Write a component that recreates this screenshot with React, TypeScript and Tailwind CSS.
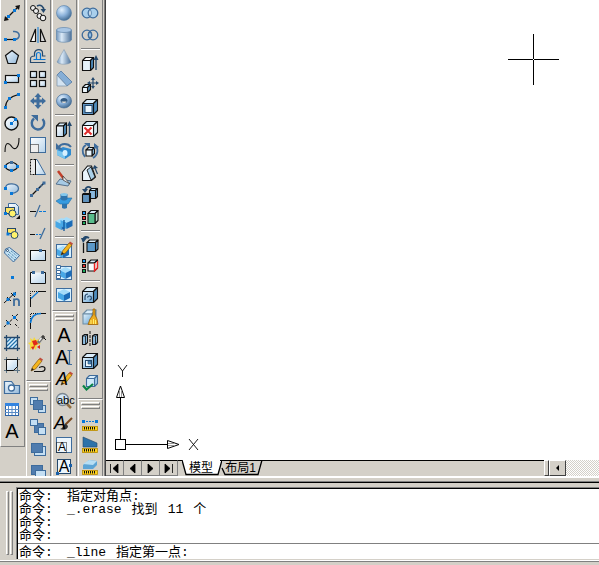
import type { ReactNode } from "react";

const INK = "#111111";
const BLUE = "#0878d8";
const STEEL = "#3e6c9c";
const NAVY = "#24486c";

type Tool = { name: string; art: ReactNode };
type Item = Tool | "sep";

const Dot = ({ x, y, c = BLUE }: { x: number; y: number; c?: string }) => (
  <rect x={x - 1.5} y={y - 1.5} width="3" height="3" fill={c} stroke="none" />
);

// Isometric looking box: front face plus top and right side
const Box = ({ x, y, w, h, d, front = "url(#face)", side = "#4f8dbd", top = "#d9edfa", line = INK }: {
  x: number; y: number; w: number; h: number; d: number;
  front?: string; side?: string; top?: string; line?: string;
}) => (
  <g stroke={line} strokeWidth="1.1" strokeLinejoin="round">
    <path d={`M${x} ${y}l${d} ${-d}h${w}l${-d} ${d}z`} fill={top} />
    <path d={`M${x + w} ${y}l${d} ${-d}v${h}l${-d} ${d}z`} fill={side} />
    <rect x={x} y={y} width={w} height={h} fill={front} />
  </g>
);

const Hex = ({ x, y, s }: { x: number; y: number; s: number }) => (
  <g>
    <path d={`M${x} ${y - s}l${s} ${s / 2}l${-s} ${s / 2}l${-s} ${-s / 2}z`} fill="#a5dcfa" />
    <path d={`M${x - s} ${y - s / 2}l${s} ${s / 2}v${s}l${-s} ${-s / 2}z`} fill="#48a8e6" />
    <path d={`M${x + s} ${y - s / 2}l${-s} ${s / 2}v${s}l${s} ${-s / 2}z`} fill="#1c6cb8" />
  </g>
);

const Letter = ({ size = "text-xl", x = "" }: { size?: string; x?: string }) => (
  <span className={`absolute inset-0 flex items-center justify-center leading-none text-black ${size} ${x}`}>A</span>
);

const Ruler = () => (
  <g>
    <rect x="2.5" y="13.5" width="15" height="4" fill="#ffd21a" stroke="#b88a00" strokeWidth=".8" />
    <path d="M4.5 14v2.5M6.5 14v2.5M8.5 14v2.5M10.5 14v2.5M12.5 14v2.5M14.5 14v2.5" stroke={INK} />
  </g>
);

const Swatch = ({ c, y }: { c: string; y: number }) => (
  <rect x="2.5" y={y + 0.5} width="3" height="3" fill={c} stroke={INK} />
);

const Brush = () => (
  <g>
    <path d="M18 5l-7 7" stroke="#7a4a20" strokeWidth="2" />
    <path d="M12 11c-3 0-2 4-6 5 4 2 8 0 8-3z" fill="#333" stroke="none" />
  </g>
);

const Pencil = ({ x = 0, y = 0 }: { x?: number; y?: number }) => (
  <g transform={`translate(${x} ${y})`} stroke="none">
    <path d="M3 13l1.500-4 6.500-8 3 2-6.500 8z" fill="#f5b51c" stroke="#82550c" strokeWidth=".7" />
    <path d="M11 1l1-1.500 3 2-1 1.500z" fill="#c04a3a" />
    <path d="M3 13l1-3 2 1.500z" fill="#222" />
  </g>
);

const drawTools: Item[] = [
  { name: "直线", art: <g><path d="M4 16L16 4" stroke={INK} strokeWidth="1.3" /><path d="M2 18l1-5 4 4zM18 2l-5 1 4 4z" fill={INK} /><Dot x={6.5} y={13.5} /><Dot x={12.5} y={7.5} /></g> },
  { name: "多段线", art: <g><path d="M3 14.5h9.5" stroke={INK} strokeWidth="1.2" /><path d="M11 6.5c8-1 8 8 1.500 8" stroke={STEEL} strokeWidth="1.5" /><Dot x={3.5} y={14.5} /><Dot x={12.5} y={14.5} /></g> },
  { name: "正多边形", art: <path d="M10 3.500l6.500 5-2.500 8H6l-2.500-8z" fill="url(#soft)" stroke={INK} strokeWidth="1.2" /> },
  { name: "矩形", art: <g><rect x="3.5" y="6.5" width="13" height="7" fill="url(#pale)" stroke={INK} strokeWidth="1.2" /><Dot x={3.5} y={13.5} /><Dot x={16.5} y={6.5} /></g> },
  { name: "圆弧", art: <g><path d="M3.500 16.500c0-7 5-11 13-13" stroke={INK} strokeWidth="1.2" /><Dot x={3.5} y={16.5} /><Dot x={7.5} y={7.5} /><Dot x={16.5} y={3.5} /></g> },
  { name: "圆", art: <g><circle cx="9.5" cy="10.5" r="6.5" fill="url(#pale)" stroke={INK} strokeWidth="1.4" /><path d="M9.500 10.500l4-4" stroke={STEEL} /><Dot x={9.5} y={10.5} /><Dot x={13.5} y={6.5} /></g> },
  { name: "样条曲线", art: <path d="M3 17c0-13 5-8 7-5s7 3 7-9" stroke={INK} strokeWidth="1.1" /> },
  { name: "椭圆", art: <g><ellipse cx="9.5" cy="9.5" rx="6" ry="4" fill="url(#soft)" stroke={INK} strokeWidth="1.2" /><Dot x={3.5} y={9.5} /><Dot x={15.5} y={9.5} /><Dot x={9.5} y={13.5} /><Dot x={9.5} y={5.5} c={STEEL} /></g> },
  { name: "椭圆弧", art: <g><path d="M3.500 9C4 3 16 4 16.500 9.500c0 4-4 4.500-7 5" fill="url(#soft)" stroke={STEEL} strokeWidth="1.3" /><Dot x={3.5} y={9.5} /><Dot x={9.5} y={14.5} /></g> },
  { name: "插入块", art: <g><path d="M6.500 2.500h7l3 3v8h-10z" fill="url(#pale)" stroke={STEEL} /><rect x="3.5" y="6.5" width="9" height="6" fill="#ffe560" stroke={NAVY} /><circle cx="10.5" cy="12.5" r="3.5" fill="#fff36b" stroke={NAVY} /><Dot x={3.5} y={12.5} /><path d="M18 14v4h-4z" fill={INK} /></g> },
  { name: "创建块", art: <g><rect x="5.5" y="5.5" width="8" height="5" fill="#ffe560" stroke={NAVY} /><circle cx="12.5" cy="12" r="3.5" fill="#fff36b" stroke={NAVY} /><Dot x={6} y={11} /></g> },
  { name: "标签", art: <g><path d="M2.500 8l1-4 4-1.500 10 8-6 6.500z" fill="#c4e1f3" stroke={STEEL} /><circle cx="5.5" cy="5.5" r="1" fill="#fff" stroke={NAVY} /><path d="M7 7l7 6M9 6l6 5M6 9l7 6" stroke="#286d9a" strokeDasharray="1 1" /></g> },
  { name: "点", art: <Dot x={10.5} y={10.5} /> },
  { name: "定数等分", art: <g><path d="M2 14L14 3" stroke={INK} /><path d="M5 8l4 4M9 4l4 4" stroke={INK} /><Dot x={6} y={10.5} /><Dot x={12.5} y={5} /><path d="M12 17v-7.500M12 11.500c1-2 5-2 5 1V17" stroke={STEEL} strokeWidth="1.8" /></g> },
  { name: "定距等分", art: <g><path d="M2 16L16 3" stroke={INK} strokeDasharray="3 1" /><path d="M4 9l5 5M10 4l7 7M13 13l4 4" stroke={INK} strokeDasharray="3 2" /><Dot x={6} y={12} /><Dot x={12.5} y={6.5} /></g> },
  { name: "图案填充", art: <g><rect x="4.5" y="4.5" width="11" height="11" fill="#d8f0ff" /><path d="M5 9l4-4M5 13l8-8M7 15l8-8M11 15l4-4" stroke="#2472ac" strokeWidth="1.2" /><path d="M4.500 2v16M15.500 2v16M2 4.500h16M2 15.500h16" stroke={NAVY} strokeWidth="1.3" /></g> },
  { name: "边界", art: <g><path d="M5 5h10v7l-4 3H5z" fill="url(#pale)" /><path d="M4.500 2v16M15.500 2v16M2 4.500h16M2 15.500h16" stroke="#5d7485" /><path d="M4.500 4.500h11v7l-4 4h-7z" stroke={INK} /></g> },
  { name: "面域", art: <g><path d="M2.500 16.500v-12h7l3 4h5v8z" fill="url(#soft)" stroke={STEEL} strokeWidth="1.2" /><circle cx="9.5" cy="11" r="3" fill="#fff" stroke={STEEL} strokeWidth="1.3" /></g> },
  { name: "表格", art: <g><rect x="3.5" y="4.5" width="13" height="12" fill="#fff" stroke="#2c62a6" /><rect x="3" y="4" width="14" height="3" fill="#3384e0" /><path d="M3 10.500h14M3 13.500h14M6.500 7v9M10 7v9M13.500 7v9" stroke="#5b8cc6" /></g> },
  { name: "多行文字", art: null },
];

const modifyTools: Item[] = [
  { name: "复制", art: <g><circle cx="5" cy="5" r="2.5" fill="#eee" stroke={INK} /><circle cx="8" cy="8" r="2.5" fill="#eee" stroke={INK} /><path d="M9 3c4-2 7 1 6.500 4" stroke={NAVY} strokeWidth="1.5" /><path d="M12.500 6h5.500l-2.500 4z" fill={NAVY} /><circle cx="11.5" cy="13" r="2.5" fill="#eee" stroke={INK} /><circle cx="15" cy="15" r="2.8" fill="#eee" stroke={INK} /></g> },
  { name: "镜像", art: <g><path d="M7.500 4v12.500h-5z" fill="#fff" stroke={INK} strokeWidth="1.2" /><path d="M12.500 4v12.500h5z" fill="#d9d9d9" stroke={INK} strokeWidth="1.2" /><path d="M10 2v16" stroke={BLUE} /></g> },
  { name: "偏移", art: <g><path d="M17.500 15.500h-15V12c0-2 2-3 4-3V6c1-4.500 8-4.500 8 0v3h3" stroke={NAVY} strokeWidth="1.2" /><path d="M17.500 12.500h-12M6 12.500h2.500V7c.5-2 3.500-2 4 0v5" stroke={BLUE} strokeWidth="1.2" /></g> },
  { name: "阵列", art: <g fill="url(#pale)" stroke={INK} strokeWidth="1.2"><rect x="2.5" y="2.5" width="6" height="6" /><rect x="11.5" y="2.5" width="6" height="6" /><rect x="2.5" y="11.5" width="6" height="6" /><rect x="11.5" y="11.5" width="6" height="6" /></g> },
  { name: "移动", art: <path d="M10 2l3.500 4h-2v2.500H14v-2l4 3.500-4 3.500v-2h-2.500V14h2L10 18l-3.500-4h2v-2.500H6v2L2 10l4-3.500v2h2.500V6h-2z" fill={STEEL} /> },
  { name: "旋转", art: <g><path d="M6 5.500a6.200 6.200 0 1 0 8.500.5" stroke={STEEL} strokeWidth="2.4" /><path d="M3 2h7v6.500z" fill={STEEL} /></g> },
  { name: "缩放", art: <g><rect x="2.5" y="2.5" width="15" height="15" fill="url(#pale)" stroke={STEEL} /><rect x="2.5" y="9.5" width="8" height="8" fill="#eee" stroke={INK} strokeDasharray="1 1" /></g> },
  { name: "拉伸", art: <g><path d="M7.500 2.500H9l8.500 15h-10z" fill="url(#pale)" stroke={STEEL} /><path d="M2.500 2.500h5v15h-5z" fill="#e8e8e8" stroke={INK} strokeDasharray="2 1" /><path d="M7.500 2v16" stroke={INK} /></g> },
  { name: "拉长", art: <g><path d="M4 16L16 4" stroke={INK} strokeWidth="1.3" /><path d="M9 11l7-7" stroke={STEEL} strokeWidth="2" strokeDasharray="1 1" /><Dot x={3.5} y={16.5} c={STEEL} /><Dot x={9.5} y={10.5} c={STEEL} /><Dot x={16} y={4} c={STEEL} /></g> },
  { name: "修剪", art: <g><path d="M2 10.500h6" stroke={INK} /><path d="M11 10.500h7" stroke={BLUE} strokeDasharray="3 1" /><path d="M7 16l5-12" stroke={STEEL} strokeWidth="1.2" /></g> },
  { name: "延伸", art: <g><path d="M2 11.500h5" stroke={INK} /><path d="M8 11.500h5" stroke={BLUE} strokeDasharray="2 1" /><path d="M12 16l5-11" stroke={STEEL} strokeWidth="1.3" /></g> },
  { name: "打断于点", art: <g><rect x="2.5" y="5.5" width="15" height="10" fill="url(#pale)" stroke={INK} /><Dot x={12.5} y={5.5} c={STEEL} /></g> },
  { name: "打断", art: <g><path d="M5.500 5.500h-3v11h15v-11h-3" fill="url(#pale)" stroke={INK} /><Dot x={5.5} y={5.5} c={STEEL} /><Dot x={14.5} y={5.5} c={STEEL} /></g> },
  { name: "倒角", art: <g><path d="M2.500 9v9M10 2.500h8" stroke={INK} /><path d="M2.500 9V2.500H10" stroke={INK} strokeDasharray="1 1" /><path d="M3 9.500L10 3" stroke={BLUE} strokeWidth="1.2" /></g> },
  { name: "圆角", art: <g><path d="M2.500 11v7M13 2.500h5" stroke={INK} /><path d="M2.500 10V2.500H11" stroke={INK} strokeDasharray="1 1" /><path d="M2.500 12C3 6 7 2.500 13 2.500" stroke={BLUE} strokeWidth="1.6" /></g> },
  { name: "分解", art: <g><path d="M2 5l3 2 1-3 2 3 3-1-1 3 3 2-4 1-1 5-3-3-3 3 0-5-2-2 3-1z" fill="#f7d93c" /><path d="M4 8l4-1 2 4-4 2zM3 14l4-1-2 4zM9 14l3-2 0 4z" fill="#e02819" /><path d="M10 10l4-5" stroke="#777" strokeWidth="3" /><path d="M11 8l3-4" stroke="#eee" strokeWidth="1.3" /><path d="M13 4h4M15 2v4M16 5l2 2" stroke={INK} /></g> },
  { name: "编辑多段线", art: <g><path d="M6 16.500h8c4-1 4-5 0-5l-3 1" stroke={INK} strokeWidth="1.2" /><Pencil x={0} y={3} /></g> },
];

const sheet = (x: number, y: number, fill: string, w = 9, h = 9) => (
  <rect x={x} y={y} width={w} height={h} fill={fill} stroke={STEEL} />
);
const orderTools: Item[] = [
  { name: "前置", art: <g>{sheet(2.5, 2.5, "#c5dff3", 7, 7)}{sheet(10.5, 10.5, "#c5dff3", 7, 7)}{sheet(5.5, 5.5, "#507cae")}</g> },
  { name: "后置", art: <g>{sheet(6.5, 6.5, "#507cae")}{sheet(2.5, 2.5, "#c5dff3", 7, 6)}{sheet(10.5, 10.5, "#c5dff3", 7, 7)}</g> },
  { name: "置于对象之上", art: <g>{sheet(6.5, 7.5, "#c5dff3", 11, 9)}{sheet(3.5, 4.5, "#507cae", 11, 9)}</g> },
  { name: "置于对象之下", art: <g>{sheet(3.5, 4.5, "#507cae", 11, 9)}{sheet(7.5, 9.5, "#c5dff3", 10, 8)}</g> },
];

const viewport = <rect x="2.5" y="3.5" width="15" height="13" fill="#d8f1ff" stroke={STEEL} />;

const solidTools: Item[] = [
  { name: "球体", art: <circle cx="10" cy="10" r="7.5" fill="url(#ball)" stroke="#587fa8" strokeWidth=".6" /> },
  { name: "圆柱体", art: <g><path d="M2.500 5v10c2 3 13 3 15 0V5z" fill="url(#tube)" stroke="#587fa8" strokeWidth=".6" /><ellipse cx="10" cy="5" rx="7.5" ry="2.5" fill="#a9c6e4" stroke="#6488ad" strokeWidth=".7" /></g> },
  { name: "圆锥体", art: <path d="M10 2.500L3 15c2 3 12 3 14 0z" fill="url(#tube)" stroke="#7690aa" strokeWidth=".5" /> },
  { name: "楔体", art: <g><path d="M3 6l4-4 11 11-5 4z" fill="#86aed6" stroke="#456f9c" strokeWidth=".7" /><path d="M3 6v11h10z" fill="#d3e3f1" stroke="#7891a8" strokeWidth=".7" /></g> },
  { name: "圆环体", art: <g><ellipse cx="10" cy="10" rx="7.5" ry="7" fill="url(#ball)" stroke="#476e97" strokeWidth=".7" /><ellipse cx="10" cy="9.5" rx="3.5" ry="2.5" fill="#345c84" /><path d="M7.500 10.500c1 2 4 2 5 0" fill="#dcd9d2" /></g> },
  "sep",
  { name: "拉伸实体", art: <g><Box x={2.5} y={7} w={7} h={10.5} d={3} front="url(#pale)" /><path d="M15.500 18V5" stroke={NAVY} strokeWidth="1.4" /><path d="M13 7l2.500-5 2.500 5z" fill={NAVY} /></g> },
  { name: "旋转实体", art: <g><path d="M3 9l6-3 8 2v6l-6 4-8-4z" fill="#2f8bd0" /><path d="M3 9l8 3v6l-8-4z" fill="#79c5ef" /><ellipse cx="11" cy="12" rx="2.5" ry="3" fill="#d6f0ff" /><path d="M5 6c2-4 9-4 12 0" stroke={STEEL} strokeWidth="2" /><path d="M2 2v6.500h6.500z" fill={STEEL} /></g> },
  "sep",
  { name: "剖切", art: <g><path d="M2 15l4-5 11 2-3 5z" fill="#a6cae5" stroke="#56718d" /><path d="M4 2l6 8" stroke="#c23f29" strokeWidth="2.5" /><path d="M9 7l7 8-7-4z" fill="#eee" stroke="#444" strokeWidth=".8" /></g> },
  { name: "截面", art: <g><path d="M2 10l5-3h11l-4 6H6z" fill="#369be0" stroke="#1e6fa8" strokeWidth=".6" /><path d="M6.500 3h7v5c-2 2-5 2-7 0zM8 13h5v4c-2 1-3 1-5 0z" fill="#2f74ac" /><ellipse cx="10" cy="3.5" rx="3.5" ry="1.5" fill="#83c7ec" /></g> },
  { name: "干涉", art: <g><Hex x={7.5} y={11} s={6} /><Hex x={12.500} y={10} s={6} /><path d="M10 7v11" stroke="#0c549a" strokeWidth="1.3" /></g> },
  "sep",
  { name: "设置图形", art: <g>{viewport}<Hex x={9} y={11} s={6} /><Pencil x={4} y={1} /></g> },
  { name: "设置视图", art: <g>{viewport}<Hex x={11.5} y={10} s={6} /><path d="M2.500 2.500h4v3h-4zM2.500 7.500h4v3h-4zM2.500 12.500h4v3h-4z" fill="#fff" stroke={STEEL} /></g> },
  { name: "设置轮廓", art: <g>{viewport}<Hex x={10} y={10} s={6} /></g> },
];

const textTools: Item[] = [
  { name: "多行文字 A", art: null },
  { name: "单行文字", art: <path d="M13.500 3.500h4.500M15.500 3.500v14M13.500 17.500h4.500" stroke={STEEL} strokeWidth="1.2" /> },
  { name: "编辑文字", art: <Pencil x={4} y={3} /> },
  { name: "查找", art: <g><circle cx="8.5" cy="8.5" r="6" fill="#d6e8f6" stroke="#7b8791" strokeWidth="1.3" /><path d="M13 13l4 4" stroke="#916f42" strokeWidth="2.5" /></g> },
  { name: "文字样式", art: <Brush /> },
  { name: "缩放文字", art: <g><rect x="2.5" y="2.5" width="15" height="15" fill="#edf6fc" stroke={STEEL} /><rect x="2.5" y="7.5" width="10" height="10" stroke={INK} strokeDasharray="1 1" /></g> },
  { name: "对正文字", art: <g><rect x="3.5" y="2.5" width="13" height="14" fill="#edf6fc" stroke={NAVY} /><Dot x={3.5} y={16.5} c="#195fa8" /><Dot x={16.5} y={8.5} c="#195fa8" /></g> },
];

const editTools: Item[] = [
  { name: "并集", art: <g stroke={STEEL} strokeWidth="1.3"><circle cx="7" cy="10" r="4.8" fill="#a9cfec" /><circle cx="13" cy="10" r="4.8" fill="#a9cfec" /><path d="M10 6.500a5 5 0 0 1 0 7 5 5 0 0 1 0-7" fill="#d4e6f2" strokeWidth=".7" /></g> },
  { name: "差集", art: <g stroke={STEEL} strokeWidth="1.3"><circle cx="7" cy="10" r="4.8" /><circle cx="13" cy="10" r="4.8" /><path d="M10 6.500a5 5 0 0 1 0 7 5 5 0 0 1 0-7" fill="#9cc6ea" /></g> },
  "sep",
  { name: "拉伸面", art: <g><Box x={2.5} y={7.5} w={8} h={10} d={3} front="#e6f2fa" top="#fff" /><path d="M16 17V5" stroke={NAVY} strokeWidth="1.4" /><path d="M13.500 7l2.500-5 2.500 5z" fill={NAVY} /></g> },
  { name: "移动面", art: <g><Box x={2.5} y={12.5} w={5} h={5} d={3} front="#edf7fd" /><path d="M13 4v8M9 8h8" stroke={NAVY} strokeWidth="1.2" /><path d="M13 2l2 3h-4zM13 14l-2-3h4zM7 8l3-2v4zM19 8l-3-2v4z" fill={NAVY} /></g> },
  { name: "偏移面", art: <g><Box x={2.5} y={6.5} w={11} h={11} d={4} front="#5f95c4" /><rect x="5" y="8.5" width="7" height="7" fill="#edf8ff" stroke={NAVY} /></g> },
  { name: "删除面", art: <g><Box x={2.5} y={6.5} w={11} h={11} d={4} front="#fff" side="#d4e3ec" /><path d="M4.500 8.500l7 7M11.500 8.500l-7 7" stroke="#e02c2c" strokeWidth="2" /></g> },
  { name: "旋转面", art: <g><Box x={6} y={9} w={6} h={6} d={2.5} front="#eaf5fc" side="#8dbddf" /><path d="M6 4C2 6 1.500 12 5 16M13 17c5-3 6-9 2-13" stroke={STEEL} strokeWidth="1.8" /><path d="M4 2h6v5zM14 2l5 4-5 2z" fill={STEEL} /></g> },
  { name: "倾斜面", art: <g><path d="M2.500 9l5-6h4l4 11-4 3.500h-9z" fill="#eaf5fc" stroke={INK} strokeWidth="1.1" /><path d="M7 7l4 10 4-3-4-10z" fill="#a9cfe8" stroke={INK} strokeWidth=".9" /><path d="M17.500 11L15 5" stroke={NAVY} strokeWidth="1.2" /><path d="M12.500 6l2-4 3.500 3z" fill={NAVY} /></g> },
  { name: "复制面", art: <g><Box x={9.500} y={5.500} w={6} h={8} d={2} front="#8ab9de" /><Box x={2.5} y={9.5} w={7} h={8} d={1} front="#5f92bd" /><path d="M11 3C8 1 6 2 5 5" stroke={NAVY} strokeWidth="1.7" /><path d="M2 4h6l-3 4z" fill={NAVY} /></g> },
  { name: "着色面", art: <g><Swatch c="#1997f2" y={4} /><Swatch c="#e83232" y={9} /><Swatch c="#1dac5c" y={14} /><Box x={8} y={6.5} w={7} h={10} d={3} front="#58bd8c" side="#b8dccc" /></g> },
  "sep",
  { name: "复制边", art: <g><Box x={7} y={7.5} w={8.500} h={9} d={2.5} front="#5b99ca" /><path d="M3.500 18V8" stroke={INK} strokeWidth="1.3" /><path d="M9 3C6 1 4 2 3.500 4" stroke={NAVY} strokeWidth="2" /><path d="M1 3h6l-4 5z" fill={NAVY} /></g> },
  { name: "着色边", art: <g><Swatch c="#1997f2" y={2} /><Swatch c="#e83232" y={7} /><Swatch c="#1dac5c" y={12} /><Box x={8} y={6} w={6.5} h={8} d={3} front="#f7fbfd" side="#ffeaea" /><path d="M14.500 6v8l3-3V4" stroke="#ed2424" strokeWidth="1.3" /></g> },
  "sep",
  { name: "压印", art: <g><Box x={2.5} y={6.5} w={11} h={11} d={4} /><path d="M5 15v-3a3 3 0 0 1 3-3M7.500 12.500a2 2 0 1 1 2 2.500" stroke={NAVY} strokeWidth="1.2" /></g> },
  { name: "清除", art: <g><Box x={3} y={7} w={9} h={10} d={4} line="#6f8ea5" /><path d="M13 2h2v6l2 4 1 5.500H8l2-5.500 3-4z" fill="#edad20" stroke="#9f6308" strokeWidth=".8" /><path d="M11 13v4M13.500 12v5M15.500 13v4" stroke="#fff071" /></g> },
  { name: "分割", art: <g><path d="M2.500 7l2-1.500h3v8l-2 2h-3zM12.500 7l2-1.500h3v8l-2 2h-3z" fill="#8fbfe2" stroke={INK} strokeWidth="1.1" /><path d="M2.500 7h3v8M5.500 7l2-1.500M12.500 7h3v8M15.500 7l2-1.500" stroke={INK} strokeWidth=".8" /><path d="M10 2v16" stroke={INK} strokeDasharray="3 1" /></g> },
  { name: "抽壳", art: <g><Box x={2.5} y={6.5} w={11} h={11} d={4} /><rect x="5.5" y="9.5" width="6" height="6" fill="#eef9ff" stroke={NAVY} /><path d="M8 10h3v3H8z" fill="#5292c4" stroke={NAVY} strokeWidth=".6" /></g> },
  { name: "检查", art: <g><Box x={6.5} y={5.5} w={8} h={8} d={3} front="#cfe9f9" side="#a2cbe8" line={STEEL} /><path d="M3 12.500l3.500 4 6.500-5.500" stroke="#078346" strokeWidth="2.2" /></g> },
];

const inquiryTools: Item[] = [
  { name: "距离", art: <g><path d="M3 8.500h14" stroke={BLUE} strokeDasharray="2 1" /><Dot x={3.5} y={8.5} /><Dot x={16.5} y={8.5} /><Ruler /></g> },
  { name: "面积", art: <g><path d="M3 2l14 6v4H3z" fill="#2c72aa" stroke={NAVY} strokeWidth=".6" /><Ruler /></g> },
  { name: "体积", art: <g><path d="M3 8l6-5 8 1v4l-4 4H3z" fill="#5ca4d5" /><path d="M3 7l6-4 8 1-4 4z" fill="#b7def4" /><Ruler /></g> },
];

// Letters that sit on top of or in place of the drawing
const letters: Record<string, ReactNode> = {
  多行文字: <Letter />,
  "多行文字 A": <Letter />,
  单行文字: <Letter x="pr-1" />,
  编辑文字: <Letter size="text-lg italic" x="pr-1" />,
  查找: <span className="absolute inset-0 flex items-center pb-0.5 pl-1 text-[11px] leading-none text-black">abc</span>,
  文字样式: <Letter size="text-lg italic" x="pr-2" />,
  缩放文字: <Letter size="text-xs" x="pt-1 pr-1" />,
  对正文字: <Letter size="text-base" />,
};

function Icon({ tool }: { tool: Tool }) {
  return (
    <button type="button" aria-label={tool.name} className="relative flex h-[22px] w-[22px] shrink-0 items-center justify-center">
      {tool.art && (
        <svg width="20" height="20" viewBox="0 0 20 20" fill="none">{tool.art}</svg>
      )}
      {letters[tool.name]}
    </button>
  );
}

function Toolbar({ items, grip, open }: { items: Item[]; grip?: boolean; open?: boolean }) {
  return (
    <div
      role="toolbar"
      className={`w-[25px] shrink-0 border-l border-r border-l-white border-r-[#808080] ${open ? "" : "border-b border-b-[#808080] pb-1"} ${grip ? "border-t border-t-white" : "pt-0.5"}`}
    >
      {grip && (
        <div className="flex h-3 flex-col gap-px px-0.5 pt-0.5">
          <div className="h-[3px] border border-t-white border-r-[#808080] border-b-[#808080] border-l-white" />
          <div className="h-[3px] border border-t-white border-r-[#808080] border-b-[#808080] border-l-white" />
        </div>
      )}
      {items.map((item, i) =>
        item === "sep" ? (
          <div key={i} className="flex h-1.5 items-center px-0.5">
            <div className="h-0.5 w-full border-t border-b border-t-[#808080] border-b-white" />
          </div>
        ) : (
          <Icon key={i} tool={item} />
        )
      )}
    </div>
  );
}

function Gradients() {
  return (
    <svg className="absolute h-0 w-0" aria-hidden="true">
      <defs>
        <linearGradient id="face" x1="0" y1="0" x2="1" y2="1"><stop stopColor="#e4f3fc" /><stop offset="1" stopColor="#69a6d6" /></linearGradient>
        <linearGradient id="soft" x1="0" y1="0" x2="1" y2="1"><stop stopColor="#eff7fd" /><stop offset="1" stopColor="#94b9da" /></linearGradient>
        <linearGradient id="pale" x1="0" y1="0" x2="1" y2="1"><stop stopColor="#ffffff" /><stop offset="1" stopColor="#b6d3eb" /></linearGradient>
        <linearGradient id="tube"><stop stopColor="#7195bb" /><stop offset=".35" stopColor="#dbeaf8" /><stop offset="1" stopColor="#4c7098" /></linearGradient>
        <radialGradient id="ball" cx=".35" cy=".3" r=".75"><stop stopColor="#e3f1fd" /><stop offset=".5" stopColor="#8eb4dc" /><stop offset="1" stopColor="#3f688f" /></radialGradient>
      </defs>
    </svg>
  );
}

function Canvas() {
  return (
    <div className="relative min-h-0 flex-1 overflow-hidden bg-white">
      <svg className="absolute top-[34px] right-10" width="51" height="51" shapeRendering="crispEdges" stroke="#000">
        <path d="M0 25.500h25M26 25.500h25M25.500 0v25M25.500 26v25" />
      </svg>
      <svg className="absolute bottom-0 left-0" width="100" height="100" fill="none" stroke="#000">
        <g shapeRendering="crispEdges">
          <rect x="9.5" y="79.5" width="10" height="10" />
          <path d="M14.500 79V37M20 84.500h42" />
        </g>
        <path d="M14.500 26l-4 11.500h8zM73 84.500l-11.500-4v8z" />
        <path d="M13.500 30v7M15.500 30v7M62 83.500h7M62 85.500h7" stroke="#999" />
        <path d="M12 5l4.500 6L21 5M16.500 11v6M83 79l9 11M92 79l-9 11" strokeWidth=".9" />
      </svg>
    </div>
  );
}

const navPaths = [
  { name: "第一个布局", d: "M4.500 4v9M12 4v9l-5-4.500z" },
  { name: "上一个布局", d: "M11 4v9l-5-4.500z" },
  { name: "下一个布局", d: "M6 4v9l5-4.500z" },
  { name: "最后一个布局", d: "M12.500 4v9M5 4v9l5-4.500z" },
];

function LayoutTabs() {
  return (
    <div className="flex h-4 shrink-0">
      {navPaths.map((n) => (
        <button key={n.name} type="button" aria-label={n.name} className="w-[18px] border-t border-r border-b border-t-black border-r-[#808080] border-b-[#808080]">
          <svg className="-mt-px" width="17" height="16"><path d={n.d} fill="#000" stroke="#000" strokeWidth=".8" /></svg>
        </button>
      ))}
      <div className="w-1 border-t border-black" />
      <button type="button" className="relative w-[38px] text-xs leading-4">
        <svg className="absolute inset-0" width="40" height="16"><path d="M0 0l4 14.500h32L40 0" fill="#fff" stroke="#000" strokeWidth="1.3" /></svg>
        <span className="relative">模型</span>
      </button>
      <button type="button" className="relative w-[43px] text-xs leading-4">
        <svg className="absolute inset-0" width="43" height="16" fill="none" stroke="#000"><path d="M0 .5h43" /><path d="M2 8l3 6.500h33L42 0" strokeWidth="1.3" /></svg>
        <span className="relative pr-0.5">布局1</span>
      </button>
      <div className="flex-1 border-t border-black" />
      <div className="w-[5px] border border-t-white border-r-[#404040] border-b-[#404040] border-l-white" />
      <button type="button" aria-label="向左滚动" className="w-[17px] border border-t-white border-r-[#404040] border-b-[#404040] border-l-white">
        <svg width="14" height="14"><path d="M9 4v6L6 7z" fill="#000" /></svg>
      </button>
      <div className="w-[33px] bg-[repeating-conic-gradient(#fff_0_25%,#d4d0c8_0_50%)] bg-[length:2px_2px]" />
    </div>
  );
}

const history = [
  ["指定对角点:"],
  ["_.erase", "找到", "11", "个"],
  [],
  [],
];

function CommandWindow() {
  return (
    <div className="shrink-0 border-t border-[#808080]">
      <div className="flex border-t border-black pt-1">
        <div className="flex w-4 gap-px py-1 pl-1.5">
          <div className="w-[3px] border border-t-white border-r-[#808080] border-b-[#808080] border-l-white" />
          <div className="w-[3px] border border-t-white border-r-[#808080] border-b-[#808080] border-l-white" />
        </div>
        <div className="min-w-0 flex-1 border-t border-l border-[#808080]">
          <div className="border-t border-l border-black bg-white font-['Liberation_Mono','Noto_Sans_CJK_SC',monospace] text-[13px] text-black">
            <div className="h-[54px] pl-px">
              {history.map((words, i) => (
                <p key={i} className="flex h-[13px] gap-2.5 leading-[15px]">
                  <span className="-mr-2.5 w-12">命令:</span>
                  {words.map((word) => (
                    <span key={word}>{word}</span>
                  ))}
                </p>
              ))}
            </div>
            <div className="flex h-4 border-t border-[#808080] pl-px">
              <label htmlFor="command" className="flex gap-2.5 leading-[17px]">
                <span className="-mr-2.5 w-12">命令:</span>
                <span>_line</span>
                <span>指定第一点:</span>
              </label>
              <input id="command" className="min-w-0 flex-1 outline-none" />
            </div>
          </div>
        </div>
      </div>
      <div className="h-[3px] border-t border-b border-t-[#d4d0c8] border-b-[#808080] bg-white" />
      <div className="h-[3px]" />
    </div>
  );
}

export default function App() {
  return (
    <div className="flex h-screen flex-col overflow-hidden bg-[#d4d0c8] font-['Liberation_Sans','Noto_Sans_CJK_SC',sans-serif] text-black">
      <Gradients />
      <div className="flex min-h-0 flex-1 pb-[3px]">
        <div className="flex min-h-0 min-w-0 flex-1 border-b-2 border-white">
          <div className="flex shrink-0 gap-px overflow-hidden">
            <div>
              <Toolbar items={drawTools} />
            </div>
            <div>
              <Toolbar items={modifyTools} />
              <Toolbar items={orderTools} grip open />
            </div>
            <div>
              <Toolbar items={solidTools} />
              <Toolbar items={textTools} grip open />
            </div>
            <div>
              <Toolbar items={editTools} />
              <Toolbar items={inquiryTools} grip open />
            </div>
          </div>
          <main className="ml-px flex min-w-0 flex-1 border-l border-[#808080]">
            <div className="flex min-w-0 flex-1 flex-col border-l border-[#404040]">
              <Canvas />
              <LayoutTabs />
            </div>
          </main>
        </div>
      </div>
      <CommandWindow />
    </div>
  );
}
